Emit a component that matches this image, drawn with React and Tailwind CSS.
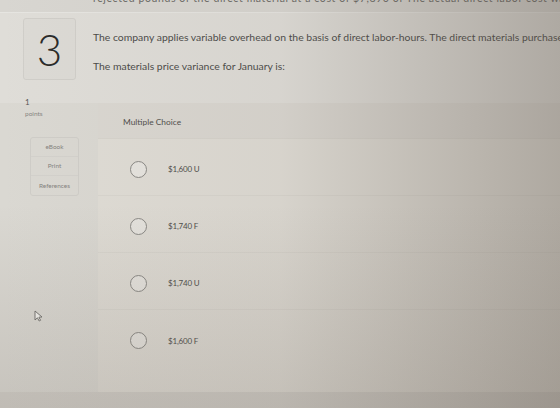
import React from 'react';

const choices = ['$1,600 U', '$1,740 F', '$1,740 U', '$1,600 F'];

const Cursor = () => (
    <svg width="10" height="12" viewBox="0 0 10 12" className="absolute left-[34px] top-[310px]">
        <path d="M1 1 L1 10 L3.4 7.8 L5.2 11 L6.6 10.3 L4.9 7.2 L8 7 Z" fill="#f4f3ef" stroke="#6b6a66" strokeWidth="0.9" strokeLinejoin="round" />
    </svg>
);

export default function App() {
    return (
        <div className="relative w-[560px] h-[408px] overflow-hidden bg-[#dad8d2] font-['Lato','Open_Sans',sans-serif] text-[#4a4a48]">
            {/* clipped line from the previous paragraph */}
            <div className="h-[13px] overflow-hidden border-b border-[#e6e5e1] bg-[#d8d6d1] pl-[93px]">
                <p className="mt-[-9px] whitespace-nowrap text-[10.5px] leading-[14px] tracking-[0.6px] text-[#6a6965]">
                    rejected pounds of the direct material at a cost of $7,890 of The actual direct labor cost was $50,880 and
                </p>
            </div>

            {/* question header */}
            <div className="flex h-[90px] bg-[#dfddd8]">
                <div className="w-[93px] shrink-0 pl-[23px] pt-[5px]">
                    <div className="flex h-[62px] w-[53px] items-center justify-center rounded-[3px] border border-[#d0cec9] bg-[#dcdad5]">
                        <span className="text-[44px] font-light leading-none text-[#2a2a29]">3</span>
                    </div>
                </div>
                <div className="min-w-0 flex-1 whitespace-nowrap pt-[17px] text-[10.4px] leading-[14px] text-[#4b4b49]">
                    <p>The company applies variable overhead on the basis of direct labor-hours. The direct materials purchases</p>
                    <p className="mt-[15px]">The materials price variance for January is:</p>
                </div>
            </div>

            {/* body: sidebar + answer panel */}
            <div className="flex h-[289px]">
                <div className="w-[98px] shrink-0 pl-[25px]">
                    <p className="-mt-[6px] text-[8px] leading-[10px] text-[#555]">1</p>
                    <p className="mt-[3px] text-[6.5px] leading-[8px] text-[#888682]">points</p>
                    <div className="ml-[5px] mt-[19px] w-[49px] rounded-[3px] border border-[#cfcdc8] text-center text-[6.4px] text-[#85837f]">
                        <div className="flex h-[19px] items-center justify-center border-b border-[#d3d1cc]">eBook</div>
                        <div className="flex h-[19px] items-center justify-center border-b border-[#d3d1cc]">Print</div>
                        <div className="flex h-[19px] items-center justify-center">References</div>
                    </div>
                </div>

                <div className="flex-1 bg-[#dfdcd5]">
                    <div className="flex h-[36px] items-center border-b border-[#d6d3cc] bg-[#dad7d1] pl-[25px] pt-[3px] text-[8.4px] text-[#4f4e4b]">
                        Multiple Choice
                    </div>
                    {choices.map((c, i) => (
                        <div key={c} className={`flex h-[57px] items-center pl-[32px] pt-[4px] ${i < 3 ? 'border-b border-[#d8d5ce]' : ''}`}>
                            <span className="h-[17px] w-[17px] rounded-full border-[1.5px] border-[#8a8985] bg-[#e6e4df]" />
                            <span className="ml-[21px] text-[8px] tracking-[-0.2px] text-[#4d4c49]">{c}</span>
                        </div>
                    ))}
                </div>
            </div>

            <div className="h-[16px] bg-[#d2cfc9]" />

            <Cursor />

            {/* screen falloff towards the right and bottom */}
            <div className="pointer-events-none absolute inset-0 bg-linear-to-r from-transparent via-[rgba(120,110,100,0.08)] to-[rgba(95,85,75,0.38)]" />
            <div className="pointer-events-none absolute inset-0 bg-linear-to-b from-transparent via-transparent to-[rgba(110,100,90,0.18)]" />
        </div>
    );
}
